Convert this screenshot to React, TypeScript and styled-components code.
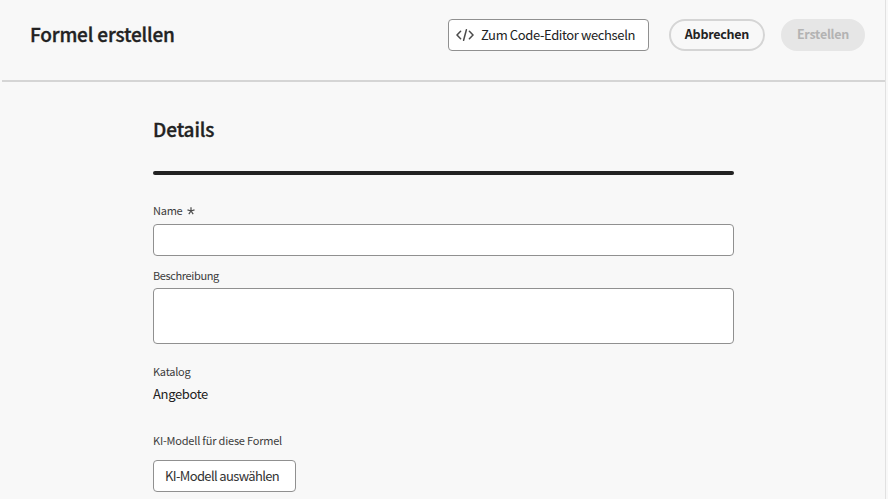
import React from "react";
import styled, { createGlobalStyle } from "styled-components";

const GlobalStyle = createGlobalStyle`
  * { box-sizing: border-box; }
  body { margin: 0; background: #f8f8f8; font-family: "Noto Sans CJK SC", "Noto Sans", sans-serif; }
`;

const Page = styled.div`
  width: 888px;
  height: 499px;
  overflow: hidden;
  background: #f8f8f8;
  color: #222;
  padding-right: 2px;
`;

const Frame = styled.div`
  height: 499px;
  border-right: 1px solid #e1e1e1;
`;

const Header = styled.header`
  height: 82px;
  margin-left: 2px;
  padding: 19px 20px 0 28px;
  display: flex;
  align-items: flex-start;
  border-bottom: 2px solid #d5d5d5;
`;

const Title = styled.h1`
  margin: 0 auto 0 0;
  font-size: 19px;
  line-height: 30px;
  font-weight: 500;
  letter-spacing: -0.17px;
  -webkit-text-stroke: 0.35px #222;
`;

const SquareButton = styled.button<{ $width: number; $inset: number; $tracking: number; $tone?: string }>`
  width: ${(p) => p.$width}px;
  height: 32px;
  padding: 0 0 0 ${(p) => p.$inset}px;
  display: flex;
  align-items: center;
  gap: 7px;
  border: 1px solid #909090;
  border-radius: 4px;
  background: #fff;
  color: ${(p) => p.$tone ?? "#222"};
  font-family: inherit;
  font-size: 13px;
  line-height: 30px;
  letter-spacing: ${(p) => p.$tracking}px;
  white-space: nowrap;

  svg { flex: none; }
`;

const PillButton = styled.button<{ $disabled?: boolean }>`
  height: 32px;
  width: ${(p) => (p.$disabled ? 84 : 96)}px;
  margin-left: ${(p) => (p.$disabled ? 16 : 20)}px;
  padding: 0 0 2px;
  border: 2px solid ${(p) => (p.$disabled ? "#e6e6e6" : "#d5d5d5")};
  border-radius: 16px;
  background: ${(p) => (p.$disabled ? "#e6e6e6" : "#f8f8f8")};
  color: ${(p) => (p.$disabled ? "#b3b3b3" : "#222")};
  font-family: inherit;
  font-size: 12.5px;
  font-weight: 700;
  line-height: 26px;
  letter-spacing: -0.25px;
`;

const Form = styled.main`
  width: 581px;
  margin-left: 153px;
`;

const SectionTitle = styled.h2`
  margin: 0;
  padding-top: 31px;
  height: 89px;
  font-size: 19px;
  line-height: 32px;
  font-weight: 500;
  letter-spacing: -0.1px;
  -webkit-text-stroke: 0.35px #222;
`;

const Rule = styled.div`
  height: 4px;
  border-radius: 2px;
  background: #222;
`;

const Label = styled.div<{ $top: number; $tracking?: number }>`
  display: flex;
  align-items: center;
  gap: 5px;
  margin-top: ${(p) => p.$top}px;
  height: 16px;
  font-size: 11px;
  line-height: 16px;
  letter-spacing: ${(p) => p.$tracking ?? -0.25}px;
  color: #3c3c3c;
`;

const Asterisk = styled.svg`
  margin-top: 2px;
`;

const Input = styled.input`
  display: block;
  width: 581px;
  height: 32px;
  margin-top: 6px;
  border: 1px solid #909090;
  border-radius: 4px;
  background: #fff;
`;

const TextArea = styled.textarea`
  display: block;
  width: 581px;
  height: 56px;
  margin-top: 5px;
  border: 1px solid #909090;
  border-radius: 4px;
  background: #fff;
  resize: none;
`;

const Value = styled.div`
  margin-top: 5px;
  height: 20px;
  margin-bottom: 28px;
  font-size: 13px;
  line-height: 20px;
  letter-spacing: -0.35px;
`;

const ModelAction = styled.div`
  margin-top: 12px;
`;

export default function App() {
  return (
    <Page>
      <GlobalStyle />
      <Frame>
        <Header>
          <Title>Formel erstellen</Title>
          <SquareButton $width={201} $inset={7} $tracking={-0.38}>
            <svg width="18" height="18" viewBox="0 0 18 18" fill="none" stroke="#4b4b4b" strokeWidth="1.5" strokeLinecap="round">
              <path d="M4.6 5.2L1 9l3.6 3.8M13.4 5.2L17 9l-3.6 3.8M10.4 3.8L7.6 14.2" />
            </svg>
            Zum Code-Editor wechseln
          </SquareButton>
          <PillButton>Abbrechen</PillButton>
          <PillButton $disabled>Erstellen</PillButton>
        </Header>
        <Form>
          <SectionTitle>Details</SectionTitle>
          <Rule />
          <Label $top={27}>
            Name
            <Asterisk width="8" height="8" viewBox="0 0 8 8" fill="none" stroke="#4b4b4b" strokeWidth="1.2">
              <path d="M4 4V.3M4 4L.5 2.9M4 4l3.5-1.1M4 4L1.8 7.2M4 4l2.2 3.2" />
            </Asterisk>
          </Label>
          <Input />
          <Label $top={11} $tracking={-0.38}>Beschreibung</Label>
          <TextArea />
          <Label $top={19}>Katalog</Label>
          <Value>Angebote</Value>
          <Label $top={0} $tracking={-0.2}>KI-Modell für diese Formel</Label>
          <ModelAction>
            <SquareButton $width={143} $inset={11} $tracking={-0.64} $tone="#333">KI-Modell auswählen</SquareButton>
          </ModelAction>
        </Form>
      </Frame>
    </Page>
  );
}
